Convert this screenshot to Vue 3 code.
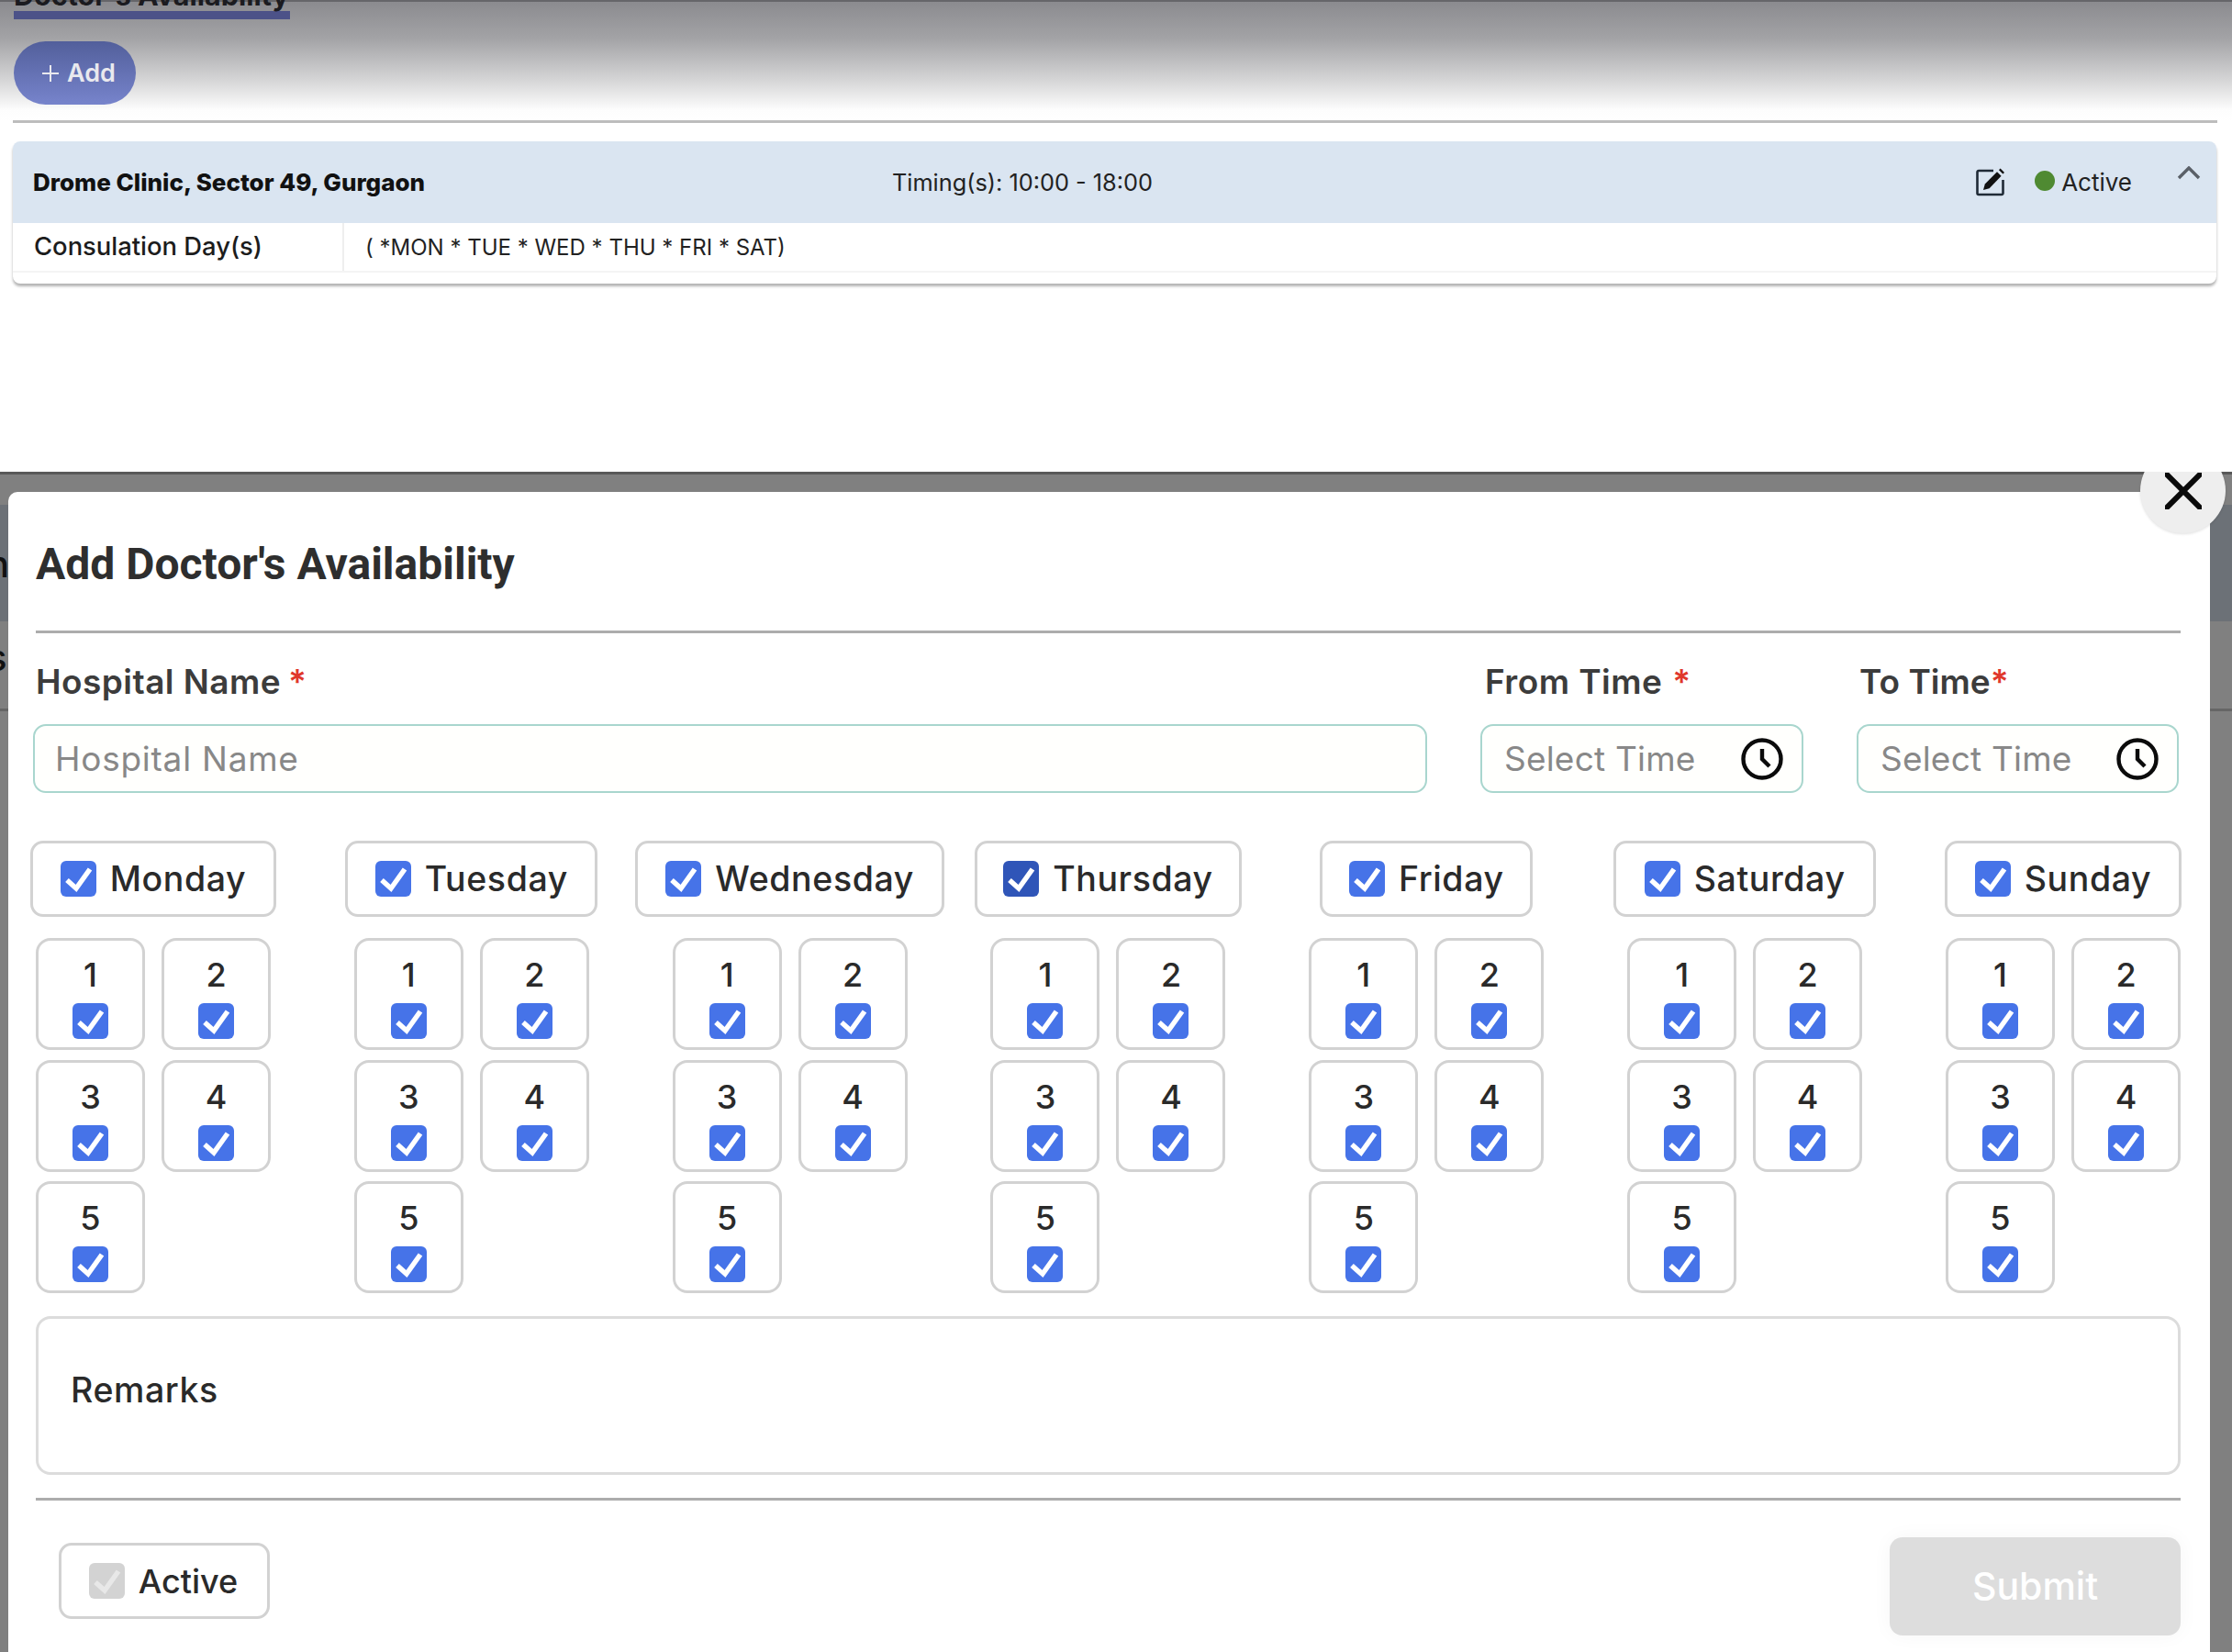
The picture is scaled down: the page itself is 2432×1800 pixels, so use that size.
<template>
  <div class="page">
    <header class="topbar">
      <div class="tab-title">Doctor's Availability</div>
      <div class="tab-line"></div>
      <button class="add-btn" type="button">
        <svg class="add-plus" viewBox="0 0 20 20"><path d="M10 1v18M1 10h18" /></svg>
        Add
      </button>
    </header>
    <div class="rule"></div>

    <section class="card">
      <div class="card-head">
        <div class="clinic">Drome Clinic, Sector 49, Gurgaon</div>
        <div class="timing">Timing(s): 10:00 - 18:00</div>
        <svg class="edit-icon" viewBox="0 0 32 32">
          <path class="edit-frame" d="M19 3H3a1.5 1.5 0 0 0-1.5 1.5v23A1.5 1.5 0 0 0 3 29h25a1.5 1.5 0 0 0 1.5-1.5V13" />
          <path class="edit-pen" d="M8 24l1.8-6.6L23 4.2l4.6 4.6L14.6 22.2z" />
          <path class="edit-pen" d="M25 2.2l1.6-1.6 4.4 4.4-1.6 1.6z" />
        </svg>
        <span class="dot"></span>
        <span class="status">Active</span>
        <svg class="chevron" viewBox="0 0 26 15"><path d="M2 13L13 2l11 11" /></svg>
      </div>
      <div class="card-row">
        <div class="row-label">Consulation Day(s)</div>
        <div class="row-value">( *MON * TUE * WED * THU * FRI * SAT)</div>
      </div>
    </section>

    <section class="overlay">
      <span class="behind behind-n">n</span>
      <span class="behind behind-s">s</span>

      <div class="modal">
        <h2 class="modal-title">Add Doctor's Availability</h2>
        <div class="modal-rule"></div>

        <div class="fields">
          <div class="field field-hospital">
            <label class="field-label">Hospital Name<span class="req req-gap">*</span></label>
            <div class="input">Hospital Name</div>
          </div>
          <div class="field field-from">
            <label class="field-label">From Time<span class="req req-gap-wide">*</span></label>
            <div class="input input-time">
              Select Time
              <svg class="clock" viewBox="0 0 46 46">
                <circle cx="23" cy="23" r="20.5" />
                <path d="M23 12v11l8 8" />
              </svg>
            </div>
          </div>
          <div class="field field-to">
            <label class="field-label">To Time<span class="req">*</span></label>
            <div class="input input-time">
              Select Time
              <svg class="clock" viewBox="0 0 46 46">
                <circle cx="23" cy="23" r="20.5" />
                <path d="M23 12v11l8 8" />
              </svg>
            </div>
          </div>
        </div>

        <div class="days">
          <div v-for="day in days" :key="day.name" class="day-col">
            <div class="day-box" :style="{ width: day.width + 'px' }">
              <span class="tick" :class="{ 'tick--dark': day.name === 'Thursday' }">
                <svg viewBox="0 0 39 39"><path d="M7 21l10 9L32 9" /></svg>
              </span>
              <span class="day-name">{{ day.name }}</span>
            </div>
            <div class="slots">
              <div v-for="n in slots" :key="n" class="slot">
                <span class="slot-num">{{ n }}</span>
                <span class="tick">
                  <svg viewBox="0 0 39 39"><path d="M7 21l10 9L32 9" /></svg>
                </span>
              </div>
            </div>
          </div>
        </div>

        <div class="remarks">Remarks</div>
        <div class="modal-rule modal-rule--low"></div>

        <div class="footer">
          <div class="active-box">
            <span class="tick tick--off">
              <svg viewBox="0 0 39 39"><path d="M7 21l10 9L32 9" /></svg>
            </span>
            <span class="active-name">Active</span>
          </div>
          <button class="submit" type="button">Submit</button>
        </div>
      </div>

      <div class="close">
        <svg viewBox="0 0 40 40"><path d="M2 2l36 36M38 2L2 38" /></svg>
      </div>
    </section>
  </div>
</template>

<script setup>
const slots = [1, 2, 3, 4, 5]

const days = [
  { name: 'Monday', width: 268 },
  { name: 'Tuesday', width: 275 },
  { name: 'Wednesday', width: 337 },
  { name: 'Thursday', width: 291 },
  { name: 'Friday', width: 232 },
  { name: 'Saturday', width: 286 },
  { name: 'Sunday', width: 258 }
]
</script>

<style>
html,
body {
  margin: 0;
  background: #fff;
}
</style>

<style scoped>
.page {
  width: 2432px;
  height: 1800px;
  overflow: hidden;
  background: #fff;
  font-family: Inter, 'Noto Sans', sans-serif;
  color: #222;
}

/* Page behind the dialog */
.topbar {
  height: 131px;
  box-sizing: border-box;
  padding-left: 15px;
  border-top: 2px solid #66666a;
  background: linear-gradient(#8b8b8f 0, #a3a3a6 40px, #d5d5d6 85px, #fdfdfd 118px, #fff 131px);
}

.tab-title {
  height: 34px;
  margin-top: -24px;
  font-size: 30.5px;
  font-weight: 700;
  line-height: 34px;
  white-space: nowrap;
  color: #1b1b20;
}

.tab-line {
  width: 301px;
  height: 9px;
  background: #4c5288;
}

.add-btn {
  display: flex;
  align-items: center;
  justify-content: center;
  gap: 8px;
  width: 133px;
  height: 69px;
  margin-top: 24px;
  padding: 0 0 0 8px;
  border: 0;
  border-radius: 35px;
  background: linear-gradient(#525f9b, #7784cc);
  font-family: inherit;
  font-size: 27px;
  font-weight: 600;
  color: #e9e9ee;
}

.add-plus {
  width: 20px;
  height: 20px;
}

.add-plus path {
  fill: none;
  stroke: #e9e9ee;
  stroke-width: 2;
}

.rule {
  height: 3px;
  margin: 0 16px 0 14px;
  background: #bdbdbd;
}

.card {
  height: 155px;
  margin: 20px 17px 0 14px;
  border-radius: 8px;
  background: #fff;
  box-shadow: 0 3px 3px rgba(0, 0, 0, 0.3);
}

.card-head {
  display: flex;
  align-items: center;
  height: 89px;
  box-sizing: border-box;
  padding: 0 17px 0 22px;
  border-radius: 8px 8px 0 0;
  background: #dae5f1;
}

.clinic {
  width: 936px;
  font-size: 26px;
  font-weight: 800;
  color: #111;
  white-space: nowrap;
}

.timing {
  font-size: 25.3px;
  color: #222;
  white-space: nowrap;
}

.edit-icon {
  width: 32px;
  height: 32px;
  margin-left: auto;
}

.edit-frame {
  fill: none;
  stroke: #1f2a36;
  stroke-width: 2.6;
}

.edit-pen {
  fill: #111;
}

.dot {
  width: 22px;
  height: 22px;
  margin: -3px 0 0 32px;
  border-radius: 50%;
  background: #4f8a32;
}

.status {
  margin-left: 7px;
  font-size: 26px;
  color: #222;
}

.chevron {
  width: 26px;
  height: 15px;
  margin: -20px 0 0 49px;
}

.chevron path {
  fill: none;
  stroke: #5a6068;
  stroke-width: 3.4;
}

.card-row {
  display: flex;
  align-items: center;
  height: 52px;
  border-bottom: 2px solid #f4f4f4;
}

.row-label {
  width: 361px;
  height: 100%;
  box-sizing: border-box;
  padding-left: 23px;
  border-right: 2px solid #eee;
  font-size: 27.4px;
  font-weight: 500;
  line-height: 51px;
  color: #1c1c1c;
}

.row-value {
  padding-left: 23px;
  font-size: 24px;
  color: #222;
}

/* Dialog */
.overlay {
  position: relative;
  height: 1286px;
  box-sizing: border-box;
  margin-top: 205px;
  padding: 22px 24px 0 9px;
  overflow: hidden;
  background: linear-gradient(#585858 0 3px, #808080 3px 36px, #6c7177 36px 163px, #808080 163px 258px, #666 258px 261px, #808080 261px);
}

.behind {
  position: absolute;
  left: -14px;
  font-size: 40px;
  font-weight: 500;
  color: #111;
}

.behind-n {
  top: 76px;
}

.behind-s {
  top: 178px;
}

.modal {
  position: relative;
  height: 100%;
  box-sizing: border-box;
  padding: 51px 32px 0 30px;
  border-radius: 10px 10px 0 0;
  background: #fff;
}

.modal-title {
  margin: 0 0 44px;
  font-family: Roboto, Inter, sans-serif;
  font-size: 48px;
  font-weight: 700;
  line-height: 56px;
  color: #2e2e2e;
}

.modal-rule {
  height: 3px;
  background: #acacac;
}

.modal-rule--low {
  margin-top: 25px;
}

.fields {
  display: flex;
  margin: 31px 0 0 -3px;
}

.field-hospital {
  width: 1519px;
}

.field-from {
  width: 352px;
  margin-left: 58px;
}

.field-to {
  width: 351px;
  margin-left: 58px;
}

.field-label {
  display: block;
  padding-left: 3px;
  font-size: 37px;
  font-weight: 600;
  letter-spacing: 0.45px;
  line-height: 44px;
  color: #3c3c3c;
  white-space: nowrap;
}

.field-from .field-label {
  padding-left: 5px;
}

.field-to .field-label {
  letter-spacing: 0;
}

.req {
  color: #e0382c;
}

.req-gap {
  margin-left: 8px;
}

.req-gap-wide {
  margin-left: 11px;
}

.input {
  display: flex;
  align-items: center;
  height: 75px;
  box-sizing: border-box;
  margin-top: 24px;
  padding-left: 22px;
  border: 2px solid #a9d6ce;
  border-radius: 14px;
  background: #fffffd;
  font-size: 37px;
  letter-spacing: 0.75px;
  color: #888;
}

.input-time {
  justify-content: space-between;
  padding-left: 24px;
  padding-right: 20px;
  letter-spacing: 0.2px;
}

.clock {
  width: 46px;
  height: 46px;
}

.clock circle,
.clock path {
  fill: none;
  stroke: #0b0b0b;
  stroke-width: 4.4;
}

.days {
  display: flex;
  justify-content: space-between;
  margin-top: 52px;
}

.day-col {
  display: flex;
  flex-direction: column;
  align-items: center;
  width: 256px;
}

.day-box,
.active-box {
  display: flex;
  align-items: center;
  justify-content: center;
  flex-shrink: 0;
  gap: 15px;
  height: 83px;
  box-sizing: border-box;
  border: 3px solid #d2d2d2;
  border-radius: 14px;
}

.day-name {
  font-size: 37.5px;
  font-weight: 500;
  letter-spacing: 0.6px;
  color: #2a2a2a;
  white-space: nowrap;
}

.active-name {
  font-size: 36px;
  font-weight: 500;
  color: #2a2a2a;
}

.tick {
  display: block;
  flex-shrink: 0;
  width: 39px;
  height: 39px;
  border-radius: 6px;
  background: #4673e8;
}

.tick svg {
  display: block;
  width: 39px;
  height: 39px;
}

.tick path {
  fill: none;
  stroke: #fff;
  stroke-width: 5.5;
}

.tick--dark {
  background: #2f55b8;
}

.tick--off {
  background: #d3d3d3;
}

.tick--off path {
  stroke: #e8e8e8;
}

.slots {
  display: grid;
  grid-template-columns: 119px 119px;
  gap: 10.5px 18px;
  margin-top: 23px;
}

.slot {
  display: flex;
  flex-direction: column;
  align-items: center;
  height: 122px;
  box-sizing: border-box;
  padding-top: 17px;
  border: 3px solid #d2d2d2;
  border-radius: 16px;
}

.slot-num {
  margin-bottom: 11px;
  font-size: 36px;
  font-weight: 500;
  line-height: 40px;
  color: #2a2a2a;
}

.remarks {
  height: 173px;
  box-sizing: border-box;
  margin-top: 25px;
  padding: 56px 0 0 35px;
  border: 3px solid #dcdcdc;
  border-radius: 16px;
  font-size: 37.5px;
  font-weight: 500;
  letter-spacing: 0.6px;
  line-height: 44px;
  color: #2a2a2a;
}

.footer {
  display: flex;
  align-items: flex-start;
  justify-content: space-between;
  margin-top: 40px;
}

.active-box {
  width: 230px;
  margin: 6px 0 0 25px;
  padding-right: 2px;
}

.submit {
  width: 317px;
  height: 107px;
  padding: 0 0 2px;
  border: 0;
  border-radius: 14px;
  background: #dddddd;
  box-shadow: 0 0 22px rgba(0, 0, 0, 0.04);
  font-family: inherit;
  font-size: 41px;
  font-weight: 500;
  color: #fff;
}

.close {
  position: absolute;
  top: -26px;
  left: 2332px;
  display: flex;
  align-items: center;
  justify-content: center;
  width: 93px;
  height: 93px;
  border-radius: 50%;
  background: #eeeeee;
  box-shadow: 0 1px 3px rgba(0, 0, 0, 0.12);
}

.close svg {
  width: 40px;
  height: 40px;
}

.close path {
  fill: none;
  stroke: #0a0a0a;
  stroke-width: 6;
  stroke-linecap: round;
}
</style>
